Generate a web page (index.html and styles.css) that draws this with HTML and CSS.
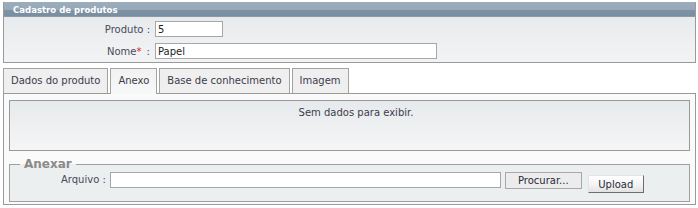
FILE: index.html
```html
<!DOCTYPE html>
<html lang="pt">
<head>
<meta charset="utf-8">
<title>Cadastro de produtos</title>
<link rel="stylesheet" href="styles.css">
</head>
<body>
<div class="page">
  <div class="panel">
    <div class="panel-header">Cadastro de produtos</div>
    <div class="panel-body">
      <div class="form-grid">
        <label class="lbl">Produto :</label>
        <input class="txt txt-short" type="text" value="5">
        <label class="lbl">Nome<span class="req">*</span> :</label>
        <input class="txt txt-long" type="text" value="Papel">
      </div>
    </div>
  </div>

  <div class="tabs">
    <div class="tab">Dados do produto</div>
    <div class="tab active">Anexo</div>
    <div class="tab">Base de conhecimento</div>
    <div class="tab">Imagem</div>
  </div>
  <div class="tab-content">
    <div class="grid-box">Sem dados para exibir.</div>
    <fieldset class="attach">
      <legend>Anexar</legend>
      <div class="attach-row">
        <label class="lbl">Arquivo :</label>
        <input class="txt txt-file" type="text" value="">
        <button class="btn btn-browse" type="button">Procurar...</button>
        <button class="btn btn-upload" type="button">Upload</button>
      </div>
    </fieldset>
  </div>
</div>
</body>
</html>
```

FILE: styles.css
```css
html, body {
  margin: 0;
  padding: 0;
  background: #ffffff;
}
body {
  font-family: "DejaVu Sans", Verdana, sans-serif;
  font-size: 10px;
  color: #404050;
}
.page {
  padding: 2px 2px 0 3px;
  width: 693px;
}
.panel {
  border: 1px solid #9a9a9a;
  border-top: none;
}
.panel-header {
  box-sizing: border-box;
  height: 14px;
  line-height: 13px;
  padding: 1px 0 0 9px;
  background: linear-gradient(#9cadbc 0%, #96a8b7 55%, #7e92a6 60%, #7a8ea2 100%);
  color: #ffffff;
  font-family: "DejaVu Sans Condensed", "Liberation Sans", sans-serif;
  font-weight: bold;
  font-size: 9.5px;
}
.panel-body {
  border-top: 1px solid #8f99a3;
  background: linear-gradient(#e8ebed, #f2f3f4);
  height: 45px;
}
.form-grid {
  display: grid;
  grid-template-columns: 146px auto;
  column-gap: 5px;
  row-gap: 6px;
  padding-top: 4px;
  align-items: center;
}
.lbl {
  text-align: right;
  color: #4a4a5c;
  white-space: nowrap;
}
.req {
  color: #e02020;
  margin-right: 2px;
}
.txt {
  box-sizing: border-box;
  height: 16px;
  border: 1px solid #a4a8ac;
  background: #ffffff;
  font-family: "DejaVu Sans", Verdana, sans-serif;
  font-size: 10px;
  color: #222;
  padding: 0 2px;
  margin: 0;
  outline: none;
}
.txt-short { width: 68px; }
.txt-long { width: 282px; }

.tabs {
  display: flex;
  gap: 2px;
  margin-top: 5px;
  height: 25px;
}
.tab {
  box-sizing: border-box;
  height: 25px;
  border: 1px solid #a3a3a3;
  border-bottom: none;
  background: #efefef;
  padding: 0 7px;
  line-height: 24px;
  color: #3c3c4c;
  white-space: nowrap;
}
.tab.active {
  background: linear-gradient(#f2f2f2, #f7f8f8);
  height: 26px;
  position: relative;
  z-index: 1;
}
.tab-content {
  box-sizing: border-box;
  border: 1px solid #9a9a9a;
  height: 112px;
  padding: 6px 5px 0 5px;
  background: #fafafa;
}
.grid-box {
  box-sizing: border-box;
  height: 51px;
  border: 1px solid #999;
  background: linear-gradient(#e7eaec, #f4f5f6);
  text-align: center;
  padding: 6px 0 0 13px;
  color: #3c3c4c;
}
.attach {
  margin: 6px 0 0 0;
  padding: 0 0 8px 0;
  border: 1px solid #a0a0a0;
  background: #ecefef;
  min-width: 0;
}
.attach legend {
  margin-left: 10px;
  padding: 0 4px;
  font-weight: bold;
  font-size: 12px;
  color: #8a8a8a;
}
.attach-row {
  display: flex;
  align-items: flex-start;
  padding-left: 51px;
  padding-top: 1px;
}
.attach-row .lbl {
  margin-right: 4px;
  line-height: 16px;
}
.txt-file { width: 391px; }
.btn {
  box-sizing: border-box;
  font-family: "DejaVu Sans", Verdana, sans-serif;
  font-size: 10px;
  color: #2a2a3a;
  margin: 0;
  padding: 0;
}
.btn-browse {
  margin-left: 4px;
  width: 77px;
  height: 17px;
  border: 1px solid #a8a8a8;
  background: #ececec;
}
.btn-upload {
  margin-left: 6px;
  margin-top: 3px;
  width: 56px;
  height: 18px;
  border: 1px solid;
  border-color: #e4e4e4 #6e6e6e #6e6e6e #e4e4e4;
  background: linear-gradient(#ffffff, #f2f2f2 60%, #e2e2e2);
}
```
